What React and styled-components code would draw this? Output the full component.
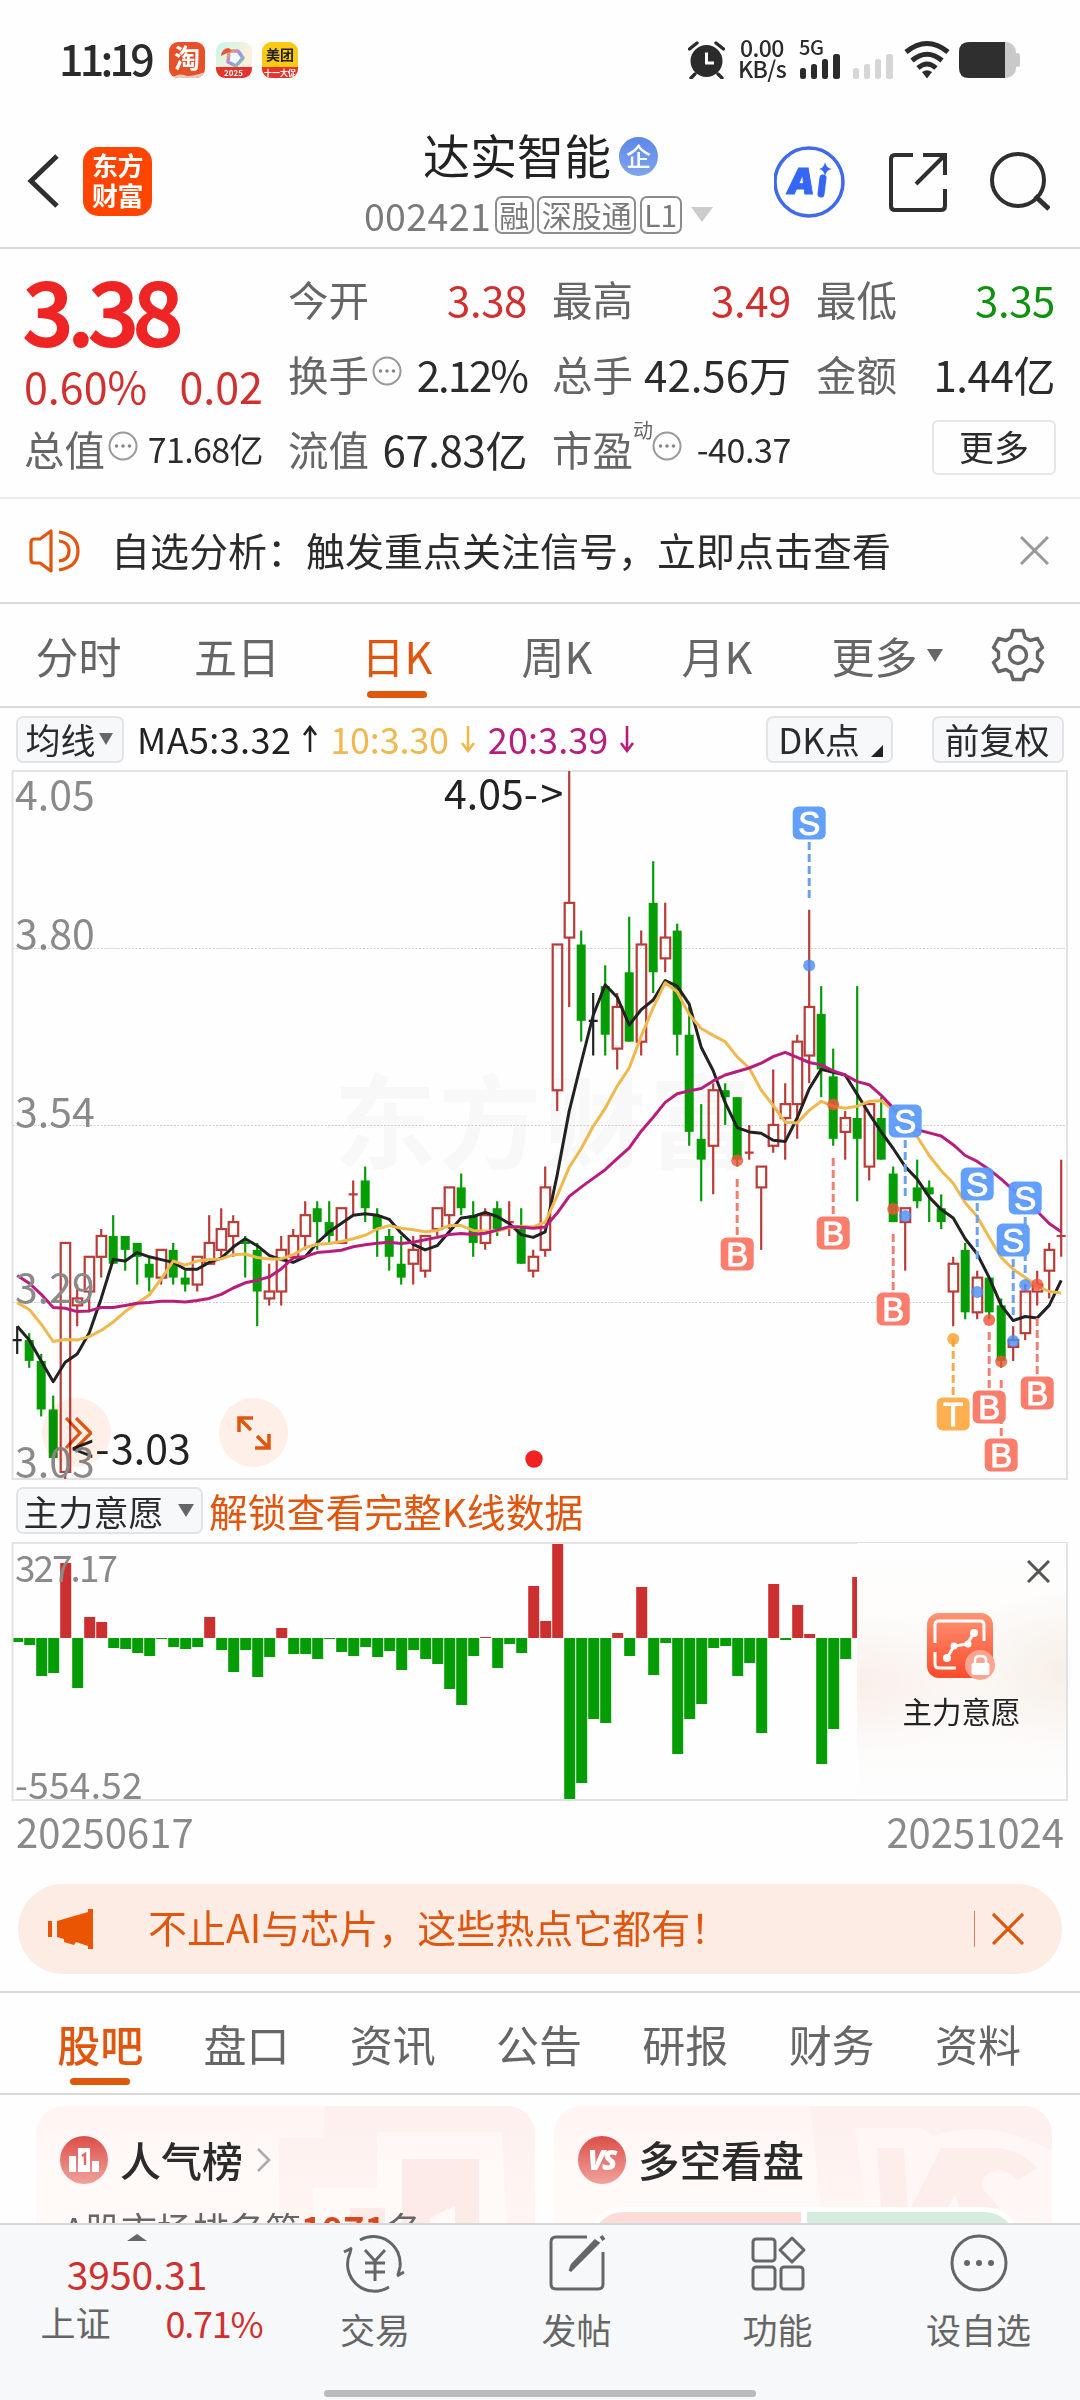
import React from "react";
import styled, { createGlobalStyle, css } from "styled-components";

const GlobalStyle = createGlobalStyle`
  * { box-sizing: border-box; }
  body {
    margin: 0;
    background: #fefefe;
    font-family: "Noto Sans CJK SC", "Noto Sans", sans-serif;
    color: #2b2b2b;
  }
  svg { display: block; flex: none; }
`;

const RED = "#d0312f";
const GREEN = "#059c05";
const ORANGE = "#e1560f";
const GREY = "#666";

/* ---------- chart data, prices in cents ---------- */

// [high, top of body, bottom of body, low, r = up / g = down / k = flat]
const candles = [
  [325, 323, 323, 321, "k"], [324, 323, 320, 319, "g"], [321, 320, 313, 312, "g"], [315, 313, 306, 306, "g"],
  [337, 337, 304, 303, "r"], [331, 329, 328, 325, "r"], [335, 335, 330, 327, "r"], [339, 338, 335, 332, "r"],
  [341, 338, 334, 334, "g"], [338, 338, 336, 333, "g"], [337, 337, 335, 331, "g"], [335, 334, 332, 330, "g"],
  [336, 336, 332, 331, "r"], [337, 336, 332, 331, "g"], [333, 332, 331, 330, "g"], [335, 335, 331, 330, "r"],
  [341, 337, 334, 334, "r"], [342, 339, 336, 335, "r"], [341, 340, 338, 335, "r"], [338, 337, 337, 332, "g"],
  [337, 336, 330, 325, "g"], [334, 330, 329, 328, "r"], [338, 336, 330, 328, "r"], [339, 338, 335, 335, "r"],
  [343, 341, 338, 336, "r"], [343, 342, 340, 336, "g"], [343, 340, 338, 337, "g"], [342, 342, 337, 337, "r"],
  [346, 344, 344, 341, "r"], [348, 346, 342, 340, "g"], [342, 341, 339, 335, "g"], [339, 338, 335, 333, "g"],
  [338, 334, 332, 331, "g"], [338, 336, 334, 331, "r"], [338, 338, 333, 332, "r"], [342, 342, 339, 338, "r"],
  [345, 345, 341, 339, "r"], [347, 345, 342, 341, "g"], [343, 341, 337, 335, "g"], [342, 341, 337, 336, "r"],
  [343, 342, 339, 338, "g"], [343, 340, 340, 338, "r"], [342, 339, 334, 334, "g"], [336, 335, 333, 332, "r"],
  [348, 345, 336, 335, "r"], [380, 380, 359, 356, "r"], [405, 386, 381, 371, "r"], [382, 380, 369, 366, "g"],
  [373, 369, 369, 364, "k"], [377, 374, 367, 364, "g"], [373, 371, 365, 362, "r"], [384, 376, 366, 366, "g"],
  [382, 380, 366, 364, "r"], [392, 386, 376, 373, "g"], [386, 381, 378, 376, "r"], [383, 382, 367, 364, "g"],
  [371, 367, 353, 351, "g"], [357, 352, 349, 343, "g"], [360, 359, 351, 344, "r"], [360, 359, 358, 354, "g"],
  [358, 358, 349, 348, "g"], [354, 350, 350, 349, "r"], [348, 348, 345, 336, "r"], [362, 354, 351, 350, "r"],
  [360, 357, 355, 349, "r"], [367, 366, 357, 352, "r"], [385, 371, 364, 360, "r"], [374, 370, 362, 358, "g"],
  [365, 361, 352, 351, "g"], [356, 355, 353, 349, "r"], [374, 355, 352, 343, "g"], [357, 357, 348, 346, "r"],
  [358, 355, 349, 349, "g"], [348, 347, 340, 340, "g"], [342, 342, 340, 333, "r"], [349, 345, 343, 342, "g"],
  [346, 345, 344, 340, "g"], [344, 342, 340, 339, "g"], [335, 334, 330, 325, "r"], [337, 336, 327, 326, "g"],
  [333, 332, 327, 326, "r"], [332, 332, 327, 326, "g"], [329, 328, 320, 319, "g"], [325, 323, 322, 320, "r"],
  [331, 330, 324, 323, "r"], [333, 331, 330, 328, "r"], [337, 336, 333, 329, "r"], [349, 338, 338, 335, "r"],
];

const closes = candles.map((c) => (c[4] === "g" ? c[2] : c[1]));
const px = (i) => 17.2 + i * 12;
const py = (p) => 1 + (405 - p) * 6.94;

// leading values come from days left of the visible range
function movingAverage(days, lead) {
  return closes.map((_, i) => {
    if (i < lead.length) return lead[i];
    const part = closes.slice(i - days + 1, i + 1);
    return part.reduce((a, b) => a + b, 0) / days;
  });
}

const toPoints = (values) => values.map((v, i) => `${px(i)},${py(v).toFixed(1)}`).join(" ");

const averages = [
  { color: "#222", values: movingAverage(5, [325, 323, 320, 317]) },
  { color: "#efb94f", values: movingAverage(10, [328.4, 327.4, 325.3, 322.8, 323.1, 323, 323.5, 324.4, 325.6]) },
  {
    color: "#b91d7c",
    values: movingAverage(20, [
      332.3, 331.2, 329.6, 327.7, 327.6, 327.1, 327.2, 327.7, 327.7, 328, 328.3, 328.4, 328.6, 328.6, 328.5, 328.7,
      329, 329.6, 330.5,
    ]),
  },
];

const markTypes = {
  S: { fill: "#5a9bfd", line: "#6aa2ee", dot: "#4c8ef5" },
  B: { fill: "#fb7563", line: "#f0806f", dot: "#f2553a" },
  T: { fill: "#ffab45", line: "#f5ab4e", dot: "#fba02c" },
};

// badge, dashed line and dot positions measured from the top of the chart
const marks = [
  { t: "S", i: 66, badge: 53, from: 72, dot: 195.5 },
  { t: "B", i: 60, badge: 484, from: 409, dot: 390.5 },
  { t: "B", i: 68, badge: 463, from: 388, dot: 334.5 },
  { t: "B", i: 73, badge: 539, from: 464, dot: 439 },
  { t: "S", i: 74, badge: 351, from: 370, dot: 446 },
  { t: "S", i: 80, badge: 414, from: 433, dot: 522 },
  { t: "S", i: 83, badge: 470, from: 489, dot: 571 },
  { t: "S", i: 84, badge: 428, from: 447, dot: 515 },
  { t: "T", i: 78, badge: 644, from: 569, dot: 569 },
  { t: "B", i: 81, badge: 637, from: 562, dot: 550 },
  { t: "B", i: 82, badge: 685, from: 610, dot: 591.5 },
  { t: "B", i: 85, badge: 623, from: 548, dot: 514.5 },
];

// main force bars, positive grows up from the zero line
const forces = [
  -4, -7, -38, -35, 75, -50, 21, 16, -10, -11, -15, -18, -1, -9, -11, -9, 21, -12, -34, -12, -39, -19, 10, -16, -16,
  -21, -1, -14, -18, -9, -19, -13, -32, -12, -21, -26, -51, -67, -18, 1, -30, -6, -15, 52, 17, 95, -162, -145, -81,
  -85, 5, -18, 51, -37, -5, -116, -81, -66, -10, -8, -38, -25, -95, 54, -2, 33, 4, -126, -91, -21, 61,
];

/* ---------- shared pieces ---------- */

const Page = styled.div`
  width: 1080px;
  height: 2400px;
  display: flex;
  flex-direction: column;
  overflow: hidden;
  background: #fefefe;
`;

const Txt = styled.span`
  font-size: ${(p) => p.$s}px;
  line-height: 1.2;
  white-space: nowrap;
  color: ${(p) => p.$c || "inherit"};
  letter-spacing: ${(p) => p.$ls || 0}px;
  font-weight: ${(p) => p.$w || 400};
`;

const Caret = styled.i`
  width: 0;
  height: 0;
  border: ${(p) => p.$w / 2}px solid transparent;
  border-bottom: 0;
  border-top: ${(p) => p.$h}px solid ${(p) => p.$c || GREY};
`;

const Cross = ({ size, color, w = 3 }) => (
  <svg width={size} height={size} viewBox={`0 0 ${size} ${size}`} stroke={color} strokeWidth={w}>
    <path d={`M1 1 L${size - 1} ${size - 1} M${size - 1} 1 L1 ${size - 1}`} />
  </svg>
);

/* ---------- status bar ---------- */

const Status = styled.div`
  height: 120px;
  flex: none;
  padding: 0 59px 0 59px;
  display: flex;
  align-items: center;
`;

const Clock = styled.span`
  width: 97px;
  padding-bottom: 5px;
  font-size: 43px;
  font-weight: 500;
  line-height: 1.2;
  letter-spacing: -3.8px;
`;

const AppIcons = styled.div`
  display: flex;
  gap: 10.5px;
  margin-left: 13px;
`;

const AppIcon = styled.div`
  width: 36px;
  height: 36px;
  border-radius: 9px;
  overflow: hidden;
  background: ${(p) => p.$bg};
  display: flex;
  flex-direction: column;
  align-items: center;
  justify-content: flex-end;
  font-weight: 700;
  line-height: 1;
  color: #fff;
`;

const IconWord = styled.span`
  font-size: ${(p) => p.$s}px;
  color: ${(p) => p.$c || "#fff"};
  line-height: ${(p) => p.$h}px;
`;

const IconStrip = styled.span`
  width: 36px;
  height: 11px;
  font-size: 8px;
  line-height: 11px;
  text-align: center;
  white-space: nowrap;
  background: #e4342b;
`;

const StatusRight = styled.div`
  margin-left: auto;
  display: flex;
  align-items: center;
  height: 44px;
`;

const Speed = styled.div`
  width: 50px;
  margin: -4px 0 0 12px;
  text-align: center;
  font: 500 23px/21px "Noto Sans CJK SC", sans-serif;
  letter-spacing: -0.6px;
  white-space: nowrap;
`;

const StatusBar = () => (
  <Status>
    <Clock>11:19</Clock>
    <AppIcons>
      <AppIcon $bg="#e8502a">
        <IconWord $s={26} $h={30}>淘</IconWord>
        <svg width="36" height="6" viewBox="0 0 36 6">
          <path d="M3 6 Q10 0 18 4 Q26 4 36 0 V6Z" fill="#e7c9b8" />
        </svg>
      </AppIcon>
      <AppIcon $bg="linear-gradient(135deg,#c5f3ee,#fbf3d8 60%,#fde9ee)">
        <svg width="36" height="25" viewBox="0 0 36 25">
          <defs>
            <linearGradient id="rain" x1="0" x2="1" y1="0" y2="1">
              <stop offset="0" stopColor="#f0a05a" />
              <stop offset=".5" stopColor="#a58af0" />
              <stop offset="1" stopColor="#6fe08a" />
            </linearGradient>
          </defs>
          <path d="M13 9 L22 9 L27 16 L20 24 L12 20Z" fill="#eefcfa" stroke="url(#rain)" strokeWidth="3.500" strokeLinejoin="round" />
          <path d="M5 14 Q6 6 13 6 L16 9 L9 12Z" fill="#e4573c" />
        </svg>
        <IconStrip>2025</IconStrip>
      </AppIcon>
      <AppIcon $bg="#fcca12">
        <IconWord $s={14} $h={25} $c="#222">美团</IconWord>
        <IconStrip>十一大促</IconStrip>
      </AppIcon>
    </AppIcons>
    <StatusRight>
      <svg width="37" height="38" viewBox="0 0 37 38">
        <circle cx="18.5" cy="20" r="16" fill="#2b2b2b" />
        <path d="M1.5 8 L9 2 M35.5 8 L28 2 M7 33 L3 37 M30 33 L34 37" stroke="#2b2b2b" strokeWidth="3.4" strokeLinecap="round" />
        <path d="M18.5 11.5 V22 H26" stroke="#fff" strokeWidth="3" fill="none" />
      </svg>
      <Speed>
        0.00
        <br />
        KB/s
      </Speed>
      <svg width="107" height="40" viewBox="2 0 107 40">
        <text x="14" y="15" fontSize="20" fontWeight="500" fill="#2b2b2b" letterSpacing="-.5">5G</text>
        <g fill="#2b2b2b">
          <rect x="15" y="28" width="6" height="11" rx="2.5" />
          <rect x="26" y="24" width="6" height="15" rx="2.5" />
          <rect x="37" y="19" width="6" height="20" rx="2.5" />
          <rect x="48" y="14" width="7" height="25" rx="2.5" />
        </g>
        <g fill="#d6d6d6">
          <rect x="68" y="28" width="6" height="11" rx="2.5" />
          <rect x="79" y="24" width="6" height="15" rx="2.5" />
          <rect x="90" y="19" width="6" height="20" rx="2.5" />
          <rect x="101" y="14" width="7" height="25" rx="2.5" />
        </g>
      </svg>
      <svg width="60" height="40" viewBox="0 0 60 40" fill="none" stroke="#2b2b2b" strokeWidth="5">
        <path d="M12 12 Q33 -5 54 12" />
        <path d="M18 20.500 Q33 8 48 20.500" />
        <path d="M24 28 Q33 20 42 28" />
        <path d="M28 32 Q33 28.500 38 32 L33 38.500Z" fill="#2b2b2b" stroke="none" />
      </svg>
      <svg width="67" height="38" viewBox="-3 0 67 38">
        <rect x="2" y="1" width="57" height="36" rx="10" fill="#c9c9c9" />
        <rect x="58" y="12" width="5" height="14" rx="2.500" fill="#c9c9c9" />
        <path d="M12 1 H48 V37 H12 Q2 37 2 27 V11 Q2 1 12 1Z" fill="#2f2f2f" />
      </svg>
    </StatusRight>
  </Status>
);

/* ---------- header ---------- */

const Head = styled.header`
  height: 129px;
  flex: none;
  border-bottom: 2px solid #dcdcde;
  padding: 0 30px 0 27px;
  display: grid;
  grid-template-columns: 300px 1fr 300px;
`;

const HeadSide = styled.div`
  display: flex;
  align-items: flex-start;
  justify-content: ${(p) => (p.$end ? "flex-end" : "flex-start")};
  padding-top: 26px;
  gap: ${(p) => p.$gap}px;
`;

const Logo = styled.div`
  width: 69px;
  height: 69px;
  margin-top: 1px;
  margin-left: -1px;
  border-radius: 15px;
  background: #ff4500;
  color: #fff;
  font-size: 26px;
  letter-spacing: -0.5px;
  font-weight: 700;
  line-height: 30px;
  text-align: center;
  padding-top: 3px;
`;

const HeadMid = styled.div`
  display: flex;
  flex-direction: column;
  align-items: center;
`;

const TitleRow = styled.div`
  display: flex;
  align-items: center;
  height: 69px;
  margin-left: 4px;
`;

const Badge = styled.span`
  width: 39px;
  height: 39px;
  margin: 3px 0 0 8px;
  border-radius: 50%;
  background: linear-gradient(#5d87ea, #7fa5ea);
  color: #fff;
  font-size: 25px;
  line-height: 36px;
  font-weight: 500;
  text-align: center;
`;

const CodeRow = styled.div`
  display: flex;
  align-items: center;
  gap: 3.5px;
  margin-top: 3px;
`;

const Tag = styled.span`
  height: 38px;
  border: 2px solid #8c8c8c;
  border-radius: 7px;
  padding: 0 2.5px;
  font-size: 30px;
  line-height: 32px;
  color: #7a7a7a;
`;

const Header = () => (
  <Head>
    <HeadSide $gap={25}>
      <svg width="32" height="70" viewBox="0 0 32 70" fill="none" stroke="#2f2f2f" strokeWidth="5">
        <path d="M30 10 L4 35 L30 60" />
      </svg>
      <Logo>
        东方
        <br />
        财富
      </Logo>
    </HeadSide>
    <HeadMid>
      <TitleRow>
        <Txt $s={47} $c="#222">达实智能</Txt>
        <Badge>企</Badge>
      </TitleRow>
      <CodeRow>
        <Txt $s={37.5} $c="#7a7a7a" $ls={0.4}>002421</Txt>
        <Tag>融</Tag>
        <Tag>深股通</Tag>
        <Tag>L1</Tag>
        <Caret $w={22} $h={15} $c="#cbcbcb" style={{ marginLeft: 6 }} />
      </CodeRow>
    </HeadMid>
    <HeadSide $end $gap={43}>
      <svg width="72" height="72" viewBox="1 0 72 72">
        <circle cx="36" cy="36" r="34" fill="#fff" stroke="#3f69ef" strokeWidth="3.500" />
        <text x="14" y="48" fontFamily="Inter" fontSize="35" fontWeight="900" fontStyle="italic" fill="#3566f5" stroke="#3566f5">A</text>
        <path d="M50 32 L48 48" stroke="#3566f5" strokeWidth="7" strokeLinecap="round" />
        <path d="M52 16 Q53 22 59 23 Q53 24 52 30 Q51 24 46 23 Q51 22 52 16Z" fill="#3566f5" />
      </svg>
      <svg width="58" height="72" viewBox="0 0 58 72" fill="none" stroke="#2f2f2f" strokeWidth="4">
        <path d="M24 9 H6 Q2 9 2 13 V60 Q2 64 6 64 H52 Q56 64 56 60 V43" />
        <path d="M34 9 H56 V29 M55 10 L27 38" />
      </svg>
      <svg width="60" height="72" viewBox="0 0 60 72" fill="none" stroke="#2f2f2f" strokeWidth="4">
        <circle cx="28" cy="34" r="26" />
        <path d="M45 50 L59 63" strokeWidth="5" />
      </svg>
    </HeadSide>
  </Head>
);

/* ---------- quote block ---------- */

const Quote = styled.section`
  height: 250px;
  flex: none;
  border-bottom: 2px solid #ececee;
  padding: 13px 25px 0 24px;
  display: grid;
  grid-template-columns: 239px 239px 239px 239px;
  grid-template-rows: 75px 75px 75px;
  column-gap: 25px;
`;

const Cell = styled.div`
  height: 75px;
  display: flex;
  align-items: center;
  justify-content: space-between;
`;

const PriceCell = styled(Cell)`
  grid-row: span 2;
  height: 150px;
  flex-direction: column;
  align-items: stretch;
  justify-content: flex-start;
`;

const BigPrice = styled.div`
  height: 99px;
  font-size: 88px;
  font-weight: 500;
  -webkit-text-stroke: 2px #ef2424;
  line-height: 91px;
  letter-spacing: -5.5px;
  color: #ef2424;
  margin-left: -1px;
`;

const ChangeRow = styled.div`
  display: flex;
  justify-content: space-between;
  color: ${RED};
  line-height: 1;
`;

const Label = styled.span`
  display: flex;
  align-items: center;
  gap: 3px;
  font-size: 40.500px;
  line-height: 1.2;
  color: ${GREY};
  & > svg { margin-bottom: 7px; }
`;

const Sup = styled.sup`
  font-size: 20px;
  line-height: 1;
  align-self: flex-start;
  margin: -5px -4px 0 -3px;
`;

const MoreBtn = styled.span`
  width: 124px;
  height: 55px;
  margin: 0 -1px 5px auto;
  border: 2px solid #e6e6e8;
  border-radius: 6px;
  font-size: 35px;
  line-height: 48px;
  text-align: center;
`;

const Info = () => (
  <svg width="30" height="30" viewBox="0 0 30 30">
    <circle cx="15" cy="15" r="13.500" fill="none" stroke="#999" strokeWidth="2" />
    <g fill="#888">
      <circle cx="8.500" cy="15" r="1.800" />
      <circle cx="15" cy="15" r="1.800" />
      <circle cx="21.500" cy="15" r="1.800" />
    </g>
  </svg>
);

const Stat = ({ label, value, color, info, size = 42, sup, ls = -0.4 }) => (
  <Cell>
    <Label>
      {label}
      {sup && <Sup>{sup}</Sup>}
      {info && <Info />}
    </Label>
    <Txt $s={size} $c={color} $ls={ls}>{value}</Txt>
  </Cell>
);

const QuoteBlock = () => (
  <Quote>
    <PriceCell>
      <BigPrice>3.38</BigPrice>
      <ChangeRow>
        <Txt $s={43}>0.60%</Txt>
        <Txt $s={43}>0.02</Txt>
      </ChangeRow>
    </PriceCell>
    <Stat label="今开" value="3.38" color={RED} />
    <Stat label="最高" value="3.49" color={RED} />
    <Stat label="最低" value="3.35" color="#0f920f" />
    <Stat label="换手" value="2.12%" info ls={-2} />
    <Stat label="总手" value="42.56万" ls={0} />
    <Stat label="金额" value="1.44亿" />
    <Stat label="总值" value="71.68亿" size={34} ls={-0.6} info />
    <Stat label="流值" value="67.83亿" />
    <Stat label="市盈" value="-40.37" size={34} info sup="动" />
    <Cell>
      <MoreBtn>更多</MoreBtn>
    </Cell>
  </Quote>
);

/* ---------- notice and period tabs ---------- */

const Notice = styled.section`
  height: 105px;
  flex: none;
  border-bottom: 2px solid #d9d9dc;
  padding: 0 31px 0 29px;
  display: flex;
  align-items: center;
  gap: 31px;
  & > span { flex: 1; padding-bottom: 3px; }
`;

const Tabs = styled.nav`
  height: 104px;
  flex: none;
  border-bottom: 2px solid #d9d9dc;
  border-top: ${(p) => (p.$line ? "2px solid #d9d9dc" : "none")};
  padding-left: ${(p) => p.$left}px;
  display: grid;
  grid-template-columns: ${(p) => p.$cols};
`;

const Tab = styled.div`
  display: flex;
  align-items: center;
  justify-content: center;
  gap: 9px;
  position: relative;
  font-size: 43px;
  line-height: 1;
  color: ${(p) => (p.$on ? ORANGE : GREY)};
  font-weight: ${(p) => (p.$bold ? 500 : 400)};
  ${(p) =>
    p.$on &&
    css`
      &::after {
        content: "";
        position: absolute;
        bottom: 8px;
        left: 50%;
        width: 60px;
        height: 7px;
        margin-left: -30px;
        border-radius: 4px;
        background: #df560d;
      }
    `}
`;

const PeriodTabs = () => (
  <Tabs $left={0} $cols="157px 160px 160px 160px 160px 180px 82px">
    <Tab>分时</Tab>
    <Tab>五日</Tab>
    <Tab $on>日K</Tab>
    <Tab>周K</Tab>
    <Tab>月K</Tab>
    <Tab>
      更多 <Caret $w={16} $h={13} />
    </Tab>
    <Tab>
      <svg width="54" height="54" viewBox="0 0 54 54" fill="none" stroke={GREY} strokeWidth="3.400" strokeLinejoin="round">
        <path d="M22 2.500 H32 L34 9.500 L39 12.500 L46.500 10.500 L51.500 19.500 L46.500 24 V30 L51.500 34.500 L46.500 43.500 L39 41.500 L34 44.500 L32 51.500 H22 L20 44.500 L15 41.500 L7.500 43.500 L2.500 34.500 L7.500 30 V24 L2.500 19.500 L7.500 10.500 L15 12.500 L20 9.500Z" />
        <circle cx="27" cy="27" r="8.500" />
      </svg>
    </Tab>
  </Tabs>
);

/* ---------- charts ---------- */

const ChartBar = styled.div`
  height: ${(p) => p.$h}px;
  flex: none;
  display: flex;
  align-items: center;
  padding: 0 16px;
`;

const Chip = styled.span`
  width: ${(p) => p.$w}px;
  height: 47px;
  display: flex;
  align-items: center;
  justify-content: center;
  gap: ${(p) => p.$gap || 0}px;
  padding-right: 2px;
  border: 2px solid #e3e4e9;
  border-radius: 7px;
  background: #f7f8fa;
  font-size: 35px;
  line-height: 40px;
  color: #2b2b2b;
`;

const Corner = styled.i`
  align-self: flex-end;
  margin: 0 -4px 4px 0;
  border: 6px solid #222;
  border-top-color: transparent;
  border-left-color: transparent;
`;

const Arrow = ({ color, up }) => (
  <svg width="16" height="28" viewBox="0 0 16 28" fill="none" stroke={color} strokeWidth="2.600">
    <path d={up ? "M8 27 V2 M2 10 L8 2 L14 10" : "M8 1 V26 M2 18 L8 26 L14 18"} />
  </svg>
);

const Averages = styled.div`
  display: flex;
  align-items: center;
  flex: 1;
  margin-left: 13px;
`;

const MaItem = styled.span`
  display: flex;
  align-items: center;
  gap: 11px;
  margin-right: 12px;
  color: ${(p) => p.$c};
`;

const ChartWrap = styled.div`
  position: relative;
  flex: none;
  height: ${(p) => p.$h}px;
`;

const RoundBtn = styled.span`
  position: absolute;
  left: ${(p) => p.$x}px;
  top: 628px;
  width: 69px;
  height: 69px;
  border-radius: 50%;
  background: #fff0e9;
  mix-blend-mode: multiply;
  display: flex;
  align-items: center;
  justify-content: center;
`;

const Candle = ({ i, c }) => {
  const [high, top, bottom, low, kind] = c;
  const x = px(i);
  const color = kind === "r" ? "#b93c38" : kind === "g" ? GREEN : "#222";
  if (top === bottom) {
    return (
      <path d={`M${x} ${py(high)} V${py(low)} M${x - 4.5} ${py(top)} H${x + 4.5}`} stroke={color} strokeWidth="2.2" />
    );
  }
  if (kind === "g") {
    return (
      <g fill={color}>
        <rect x={x - 1.1} y={py(high)} width="2.2" height={py(low) - py(high)} />
        <rect x={x - 4.5} y={py(top)} width="9" height={py(bottom) - py(top)} />
      </g>
    );
  }
  return (
    <g stroke={color} strokeWidth="2.2" fill="none">
      <path d={`M${x} ${py(high)} V${py(top)} M${x} ${py(bottom)} V${py(low)}`} />
      <rect x={x - 4.5} y={py(top)} width="9.500" height={py(bottom) - py(top)} />
    </g>
  );
};

const Mark = ({ t, i, badge, from, dot }) => {
  const m = markTypes[t];
  const x = px(i);
  return (
    <g>
      <path d={`M${x} ${from} v56`} stroke={m.line} strokeWidth="3" strokeDasharray="8 4" />
      <circle cx={x} cy={dot} r="6" fill={m.dot} opacity=".82" />
      <g opacity=".94">
        <rect x={x - 16.5} y={badge - 16.5} width="33" height="33" rx="6" fill={m.fill} />
        <text x={x} y={badge + 12} textAnchor="middle" fontFamily="Liberation Sans" fontSize="33" fill="#fff" stroke="#fff" strokeWidth="1">
          {t}
        </text>
      </g>
    </g>
  );
};

const KChart = () => (
  <ChartWrap $h={710}>
    <svg width="1080" height="710" viewBox="0 0 1080 710" fontFamily="Noto Sans CJK SC">
      <text x="334" y="391" fontSize="102" fontWeight="700" letterSpacing="3" fill="#f8f8f8">东方财富</text>
      <g stroke="#cfcfcf" strokeWidth="1" strokeDasharray="2 1.500">
        <path d="M13 178.500 H1067 M13 355.500 H1067 M13 532.500 H1067" />
      </g>
      <path d="M12.500 1 H1067 V709 H12.500Z" fill="none" stroke="#e2e2e2" strokeWidth="2" />
      {candles.map((c, i) => (
        <Candle key={i} i={i} c={c} />
      ))}
      {averages.map((a) => (
        <polyline key={a.color} points={toPoints(a.values)} fill="none" stroke={a.color} strokeWidth="3" strokeLinejoin="round" />
      ))}
      {marks.map((m) => (
        <Mark key={m.i} {...m} />
      ))}
      <circle cx="534" cy="689" r="8.700" fill="#f02222" />
      <g fontSize="41" fill="#222">
        <text x="444" y="38.500">
          4.05<tspan letterSpacing="2.500">-&gt;</tspan>
        </text>
        <text x="71" y="694">
          <tspan letterSpacing="1.500">&lt;-</tspan>3.03
        </text>
      </g>
      <g fontSize="41" fill="#8a8a8a">
        <text x="15" y="40">4.05</text>
        <text x="15" y="179">3.80</text>
        <text x="15" y="357">3.54</text>
        <text x="15" y="533">3.29</text>
        <text x="15" y="706.500">3.03</text>
      </g>
    </svg>
    <RoundBtn $x={42}>
      <svg width="30" height="32" viewBox="-2 0 30 32" fill="none" stroke={ORANGE} strokeWidth="3.200">
        <path d="M2 1 L16 16 L2 31 M12 1 L27 16 L12 31" />
      </svg>
    </RoundBtn>
    <RoundBtn $x={219}>
      <svg width="34" height="34" viewBox="0 0 34 34" fill="none" stroke={ORANGE} strokeWidth="3.500">
        <path d="M2 16 V2 H16 M3 3 L14 14 M32 18 V32 H18 M31 31 L20 20" />
      </svg>
    </RoundBtn>
  </ChartWrap>
);

const LockPanel = styled.div`
  position: absolute;
  left: 857px;
  top: 2px;
  width: 209px;
  height: 256px;
  display: flex;
  flex-direction: column;
  align-items: center;
  padding-top: 69px;
  gap: 13px;
  background: radial-gradient(ellipse 130px 70px at 0 55%, #f9efea, transparent),
    radial-gradient(ellipse 120px 80px at 100% 50%, #f7efe9, transparent), linear-gradient(#fefefe, #fcfaf7 60%, #fdfdfd);
`;

const PanelClose = styled.span`
  position: absolute;
  right: 16px;
  top: 17px;
`;

const ForceChart = () => (
  <ChartWrap $h={261}>
    <svg width="1080" height="261" viewBox="0 0 1080 261" fontFamily="Noto Sans CJK SC">
      {forces.map((f, i) => (
        <rect
          key={i}
          x={px(i) - 5}
          y={f > 0 ? 97 - f : 97}
          width={i === 70 ? 5 : 11}
          height={Math.abs(f)}
          fill={f > 0 ? "#cb2f2e" : GREEN}
        />
      ))}
      <path d="M12.500 2 H1067 V259 H12.500Z" fill="none" stroke="#e2e2e2" strokeWidth="2" />
      <g fontSize="37" fill="#8a8a8a">
        <text x="15" y="41" letterSpacing="-2">327.17</text>
        <text x="15" y="258" letterSpacing=".3">-554.52</text>
      </g>
    </svg>
    <LockPanel>
      <PanelClose>
        <Cross size={23} color="#555" />
      </PanelClose>
      <svg width="70" height="68" viewBox="1 0 70 68">
        <defs>
          <linearGradient id="lock" x1="0" x2="0" y1="0" y2="1">
            <stop offset="0" stopColor="#ff9473" />
            <stop offset="1" stopColor="#fc4a2c" />
          </linearGradient>
        </defs>
        <rect x="1" y="1" width="66" height="65" rx="12" fill="url(#lock)" />
        <path d="M9 31 V13 Q9 9 13 9 H54 Q58 9 58 13 V29 M9 40 V52 Q9 56 13 56 H30" fill="none" stroke="#fff" strokeWidth="3" />
        <path d="M21 46 L28 34 L41 32 L48 21" fill="none" stroke="#fff" strokeWidth="3" />
        <g fill="#fff">
          <circle cx="21" cy="46" r="4" />
          <circle cx="28" cy="34" r="3.500" />
          <circle cx="42" cy="32" r="3.500" />
          <circle cx="48" cy="21" r="4" />
        </g>
        <circle cx="54" cy="53" r="15" fill="#fca48f" />
        <rect x="45.500" y="51" width="18" height="12" rx="2" fill="#fff" />
        <path d="M49 52 V48 Q49 44 54.500 44 Q60 44 60 48 V52" fill="none" stroke="#fff" strokeWidth="2.500" />
      </svg>
      <Txt $s={29.5} $c="#222">主力意愿</Txt>
    </LockPanel>
  </ChartWrap>
);

const Dates = styled.div`
  height: 82px;
  flex: none;
  padding: 5px 16px 0;
  display: flex;
  justify-content: space-between;
`;

/* ---------- banner ---------- */

const Banner = styled.div`
  height: 90px;
  flex: none;
  margin: 0 18px 17px;
  padding: 0 38px 0 30px;
  border-radius: 45px;
  background: #fdece4;
  display: flex;
  align-items: center;
  & > span { flex: 1; margin-left: 54px; padding-bottom: 5px; }
`;

const Divider = styled.i`
  width: 1px;
  height: 36px;
  margin-right: 17px;
  background: #c9825c;
`;

/* ---------- cards ---------- */

const Cards = styled.section`
  height: 128px;
  flex: none;
  overflow: hidden;
  padding: 11px 28px 0 36px;
  display: grid;
  grid-template-columns: 499px 498px;
  gap: 19px;
`;

const Card = styled.div`
  position: relative;
  height: 220px;
  border-radius: 28px;
  overflow: hidden;
  background: linear-gradient(#fff5f3, #fffaf8 80px);
`;

const CardArt = styled.svg`
  position: absolute;
  right: 0;
  top: 0;
`;

const CardTitle = styled.div`
  position: relative;
  display: flex;
  align-items: center;
  gap: 12px;
  height: 48px;
  margin: 30px 0 0 24px;
`;

const RankLine = styled.div`
  position: relative;
  margin: 19px 0 0 27px;
  font-size: 36px;
  line-height: 50px;
  color: ${GREY};
  & > b { color: #d9481c; }
`;

const VoteBar = styled.div`
  position: relative;
  display: flex;
  gap: 6px;
  margin: 23px 32px 0 34px;
  border: 5px solid #fff;
  border-radius: 44px;
  overflow: hidden;
  background: #fff;
`;

const Side = styled.div`
  height: 60px;
  flex: 1;
  background: ${(p) => p.$c};
`;

const CardsRow = () => (
  <Cards>
    <Card>
      <CardArt width="290" height="130" viewBox="0 0 290 130">
        <defs>
          <linearGradient id="art" x1="0" x2="0" y1="0" y2="1">
            <stop offset="0" stopColor="#fdf0ee" />
            <stop offset="1" stopColor="#fff6f3" />
          </linearGradient>
        </defs>
        <path d="M80 0 H290 V130 H262 L257 26 H132 V82 H68 V130 H34 V32 H78Z" fill="url(#art)" />
        <path d="M157 53 H234 V130 H210 V100 L185 112 V130 H157Z M105 102 H140 V130 H105Z" fill="#fdebe8" />
      </CardArt>
      <CardTitle>
        <svg width="48" height="48" viewBox="0 0 48 48">
          <defs>
            <linearGradient id="rank" x1="0" x2="0" y1="0" y2="1">
              <stop offset="0" stopColor="#dc4e49" />
              <stop offset="1" stopColor="#f1a29c" />
            </linearGradient>
          </defs>
          <circle cx="24" cy="24" r="24" fill="url(#rank)" />
          <path d="M9 20 H16 V36 H9Z M18 12 H30 V36 H18Z M32 25 H39 V36 H32Z" fill="#fff" />
          <path d="M22 20 L25 18 V29" fill="none" stroke="#dd6b65" strokeWidth="2.500" />
        </svg>
        <Txt $s={41} $w={500} $c="#2b2b2b">人气榜</Txt>
        <svg width="16" height="24" viewBox="-1 0 16 24" fill="none" stroke="#aaa" strokeWidth="2.500">
          <path d="M2 1 L13 12 L2 23" />
        </svg>
      </CardTitle>
      <RankLine>
        A股市场排名第<b>1971</b>名
      </RankLine>
    </Card>
    <Card>
      <CardArt width="243" height="130" viewBox="0 0 243 130">
        <path d="M1 0 H243 V130 H15Z" fill="url(#art)" />
        <path d="M46 22 H112 L124 30 Q180 10 243 45 V130 H60Z" fill="#fef7f5" />
        <path d="M68 42 H95 L99 108 L132 42 H190 Q215 46 228 62 L209 74 Q190 56 176 70 Q168 80 182 92 Q196 104 196 130 H160 L146 88 L124 130 H74Z" fill="#fdedeb" />
      </CardArt>
      <CardTitle>
        <svg width="48" height="48" viewBox="0 0 48 48">
          <circle cx="24" cy="24" r="24" fill="url(#rank)" />
          <text x="23" y="34" textAnchor="middle" fontFamily="Open Sans" fontSize="28" fontWeight="800" fontStyle="italic" fill="#fff" letterSpacing="-3">VS</text>
        </svg>
        <Txt $s={41.5} $w={500} $c="#2b2b2b">多空看盘</Txt>
      </CardTitle>
      <VoteBar>
        <Side $c="#fddcd8" />
        <Side $c="#d6eddd" />
      </VoteBar>
    </Card>
  </Cards>
);

/* ---------- bottom bar ---------- */

const Bottom = styled.footer`
  position: relative;
  flex: 1;
  border-top: 2px solid #d7d8dc;
  background: #f7f8fa;
  display: grid;
  grid-template-columns: 274px 202px 201px 201px 201px;
`;

const IndexBox = styled.div`
  display: flex;
  flex-direction: column;
  align-items: center;
  padding-top: 9px;
`;

const UpMark = styled(Caret)`
  transform: rotate(180deg);
`;

const IndexValue = styled(Txt)`
  margin-top: 9px;
`;

const IndexRow = styled.div`
  display: flex;
  justify-content: space-between;
  width: 222px;
  margin: 4px 0 0 29px;
`;

const Action = styled.div`
  display: flex;
  flex-direction: column;
  align-items: center;
  padding-top: 8px;
  gap: 15px;
`;

const HomeLine = styled.div`
  position: absolute;
  left: 324px;
  bottom: 3px;
  width: 432px;
  height: 7px;
  border-radius: 4px;
  background: #bbbbbd;
`;

const actions = [
  {
    label: "交易",
    icon: (
      <>
        <path d="M17 7 A27 27 0 0 1 57 34 L55 42 M61 39 L54 43 M46 54 A27 27 0 0 1 7 20 L8 15 M1 19 L9 15" />
        <path d="M22 17 L32 28 L42 17 M32 28 V48 M22 30 H42 M22 39 H42" />
      </>
    ),
  },
  {
    label: "发帖",
    icon: (
      <>
        <path d="M42 4 H11 Q6 4 6 9 V51 Q6 56 11 56 H53 Q58 56 58 51 V19" />
        <path d="M53 10 L30 33 L25 38 L27 32 L50 8Z" fill={GREY} />
        <path d="M56 6 L59 4" strokeWidth="5" />
      </>
    ),
  },
  {
    label: "功能",
    icon: (
      <>
        <rect x="7" y="6" width="22" height="22" rx="3" />
        <rect x="7" y="34" width="22" height="22" rx="3" />
        <rect x="35" y="34" width="22" height="22" rx="3" />
        <path d="M46 5 L58 17 L46 29 L34 17Z" strokeLinejoin="round" />
      </>
    ),
  },
  {
    label: "设自选",
    icon: (
      <>
        <circle cx="32" cy="30" r="27" />
        <g fill={GREY} stroke="none">
          <circle cx="20" cy="30" r="3" />
          <circle cx="32" cy="30" r="3" />
          <circle cx="44" cy="30" r="3" />
        </g>
      </>
    ),
  },
];

const BottomBar = () => (
  <Bottom>
    <IndexBox>
      <UpMark $w={20} $h={7} />
      <IndexValue $s={39} $c={RED}>3950.31</IndexValue>
      <IndexRow>
        <Txt $s={35} $c={GREY}>上证</Txt>
        <Txt $s={36} $c={RED} $ls={-1.2}>0.71%</Txt>
      </IndexRow>
    </IndexBox>
    {actions.map((a) => (
      <Action key={a.label}>
        <svg width="64" height="60" viewBox="0 0 64 60" fill="none" stroke={GREY} strokeWidth="3">
          {a.icon}
        </svg>
        <Txt $s={35} $c={GREY}>{a.label}</Txt>
      </Action>
    ))}
    <HomeLine />
  </Bottom>
);

const sections = ["股吧", "盘口", "资讯", "公告", "研报", "财务", "资料"];

export default function App() {
  return (
    <Page>
      <GlobalStyle />
      <StatusBar />
      <Header />
      <QuoteBlock />
      <Notice>
        <svg width="51" height="44" viewBox="0 0 51 44" fill="none" stroke={ORANGE} strokeWidth="3.200">
          <path d="M22 2 V42 L11 34 H5 Q2 34 2 30 V14 Q2 10 5 10 H11Z" strokeLinejoin="round" />
          <path d="M30 12 Q40 13 40 22 Q40 31 30 32 M30 3 Q49 6 49 22 Q49 38 30 41" />
        </svg>
        <Txt $s={39}>自选分析：触发重点关注信号，立即点击查看</Txt>
        <Cross size={29} color="#999" />
      </Notice>
      <PeriodTabs />
      <ChartBar $h={62}>
        <Chip $w={108} $gap={3}>
          均线 <Caret $w={15} $h={12} />
        </Chip>
        <Averages>
          <MaItem $c="#222">
            <Txt $s={36} $ls={0.4}>MA5:3.32</Txt>
            <Arrow color="#222" up />
          </MaItem>
          <MaItem $c="#efb94f">
            <Txt $s={36} $ls={-0.2}>10:3.30</Txt>
            <Arrow color="#efb94f" />
          </MaItem>
          <MaItem $c="#b91d7c">
            <Txt $s={36} $ls={0.1}>20:3.39</Txt>
            <Arrow color="#b91d7c" />
          </MaItem>
        </Averages>
        <Chip $w={127} $gap={11} style={{ marginRight: 39 }}>
          DK点
          <Corner />
        </Chip>
        <Chip $w={132}>前复权</Chip>
      </ChartBar>
      <KChart />
      <ChartBar $h={61}>
        <Chip $w={187} $gap={14}>
          主力意愿 <Caret $w={16} $h={13} />
        </Chip>
        <Txt $s={38.8} $c={ORANGE} style={{ marginLeft: 6 }}>解锁查看完整K线数据</Txt>
      </ChartBar>
      <ForceChart />
      <Dates>
        <Txt $s={40} $c="#8a8a8a">20250617</Txt>
        <Txt $s={40} $c="#8a8a8a">20251024</Txt>
      </Dates>
      <Banner>
        <svg width="46" height="40" viewBox="0 0 46 40" fill="#ea5504">
          <path d="M0 12 H4 V28 H0Z M9 12 L40 3 V0 H45 V40 H40 V37 L28 33 L26 36 L16 33 V30 L9 28Z" />
        </svg>
        <Txt $s={39} $c={ORANGE}>不止AI与芯片，这些热点它都有！</Txt>
        <Divider />
        <Cross size={32} color={ORANGE} w={3.2} />
      </Banner>
      <Tabs $line $left={27} $cols="repeat(7, 146.300px)">
        {sections.map((s, i) => (
          <Tab key={s} $on={i === 0} $bold={i === 0}>
            {s}
          </Tab>
        ))}
      </Tabs>
      <CardsRow />
      <BottomBar />
    </Page>
  );
}
